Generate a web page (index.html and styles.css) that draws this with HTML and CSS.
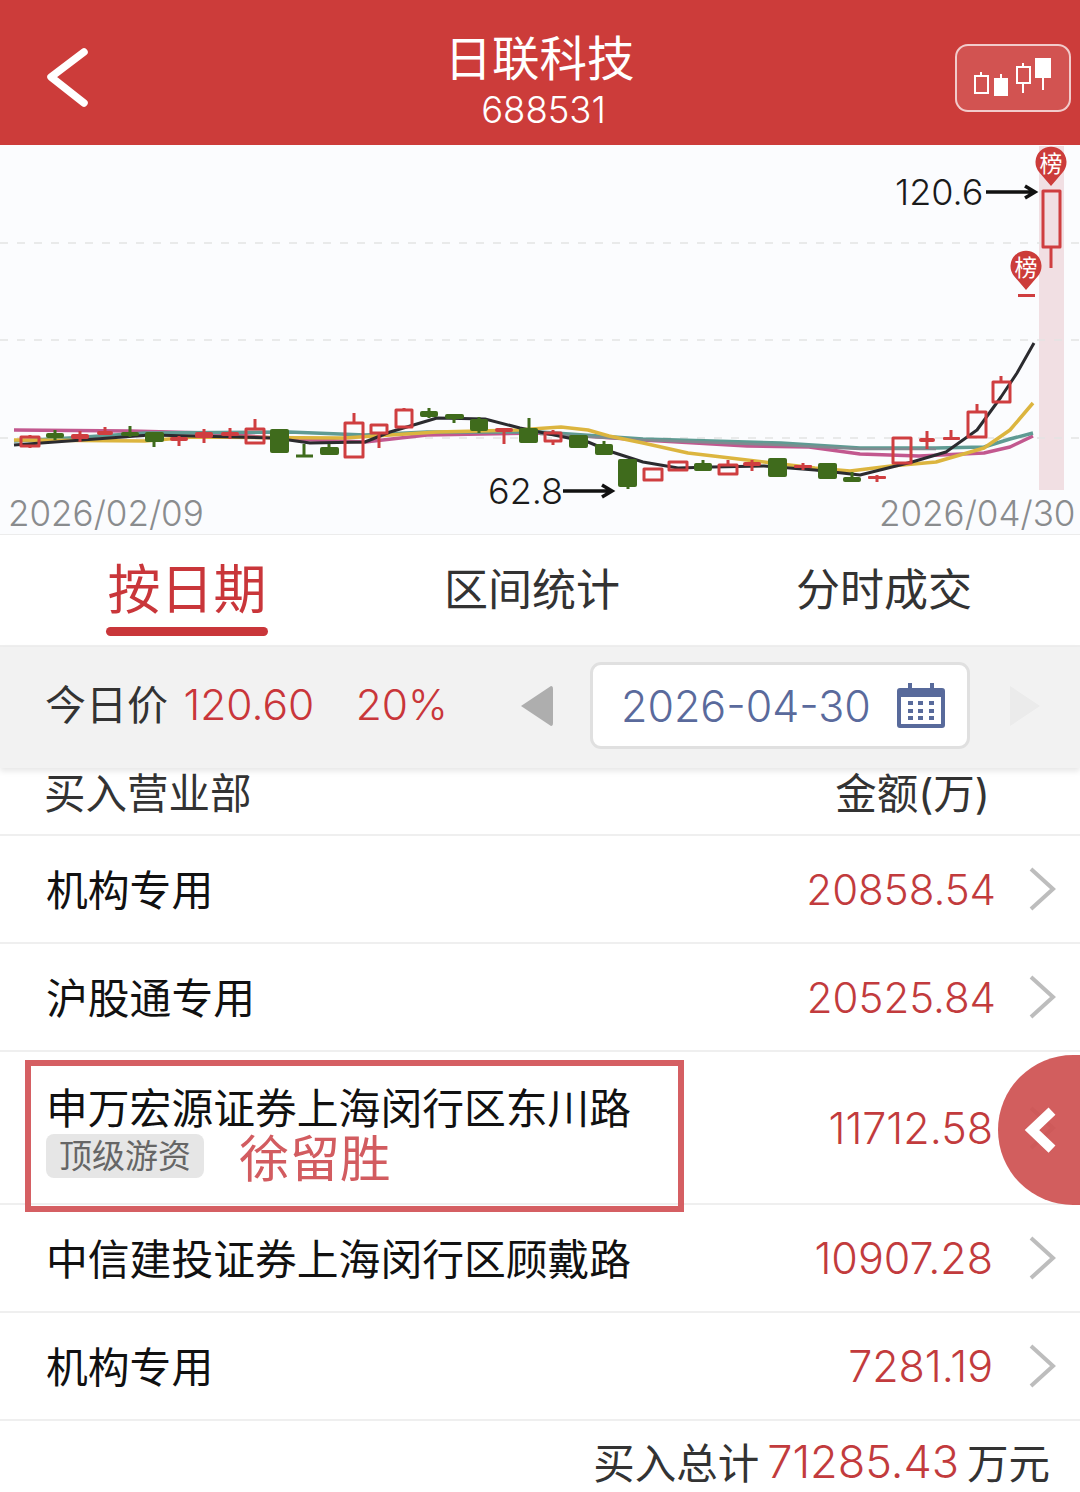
FILE: index.html
```html
<!DOCTYPE html>
<html>
<head>
<meta charset="utf-8">
<title>日联科技</title>
<link rel="stylesheet" href="styles.css">
</head>
<body>
<div class="head">
	<svg class="back" width="50" height="70" viewBox="0 0 50 70"><path d="M38 6 L5 31 L38 57"/></svg>
	<div class="title">
		<div class="name">日联科技</div>
		<div class="code">688531</div>
	</div>
	<div class="kbtn">
		<svg width="114" height="66" viewBox="956 44 114 66">
			<path class="o" d="M982 72V76M976 76H989V93H976Z"/>
			<path class="s" d="M995 78H1009V96H995Z"/>
			<path class="o" d="M1002 74V78"/>
			<path class="o" d="M1024 63V67M1018 67H1031V83H1018ZM1024 83V93"/>
			<path class="s" d="M1036 58H1052V78H1036Z"/>
			<path class="o" d="M1044 78V90"/>
		</svg>
	</div>
</div>

<div class="chart">
	<svg width="1080" height="389" viewBox="0 145 1080 389">
		<rect class="band" x="1039" y="146" width="25" height="344"/>
		<path class="grid" d="M0 243H1080M0 340H1080M0 438H1080"/>

		<polyline class="ma ma-pink" points="14,430 131,431 207,433 289,439 365,442 427,435 540,433 643,440 747,446 809,447 860,454 919,456 984,453 1010,447 1033,436"/>
		<polyline class="ma ma-teal" points="14,441 69,438 145,433 289,432 365,435 427,432 540,432 643,439 781,443 860,448 936,448 984,447 1010,439 1033,433"/>
		<polyline class="ma ma-gray" points="540,434 643,440 781,445 860,449 936,449"/>
		<polyline class="ma ma-yellow" points="14,440 145,441 193,437 344,438 437,432 517,430 561,427 588,430 609,436 643,443 688,453 747,460 815,468 850,471 891,466 936,462 984,448 1010,430 1033,403"/>
		<polyline class="ma ma-black" points="14,445 150,435 275,438 310,443 365,442 390,432 437,418 485,419 520,428 588,442 612,452 643,462 678,468 712,467 764,466 815,470 860,475 884,469 912,462 946,452 977,430 1001,397 1017,373 1034,343"/>

		<!-- 涨 -->
		<g class="up">
			<path d="M30 435V437M30 446V448M21 437H39V446H21Z"/>
			<path d="M255 419V429M246 429H264V443H246Z"/>
			<path d="M354 413V423M345 423H363V457H345Z"/>
			<path d="M379 433V448M371 425H387V433H371Z"/>
			<path d="M404 408V410M396 410H412V427H396Z"/>
			<path d="M553 430V433M553 441V445M545 433H561V441H545Z"/>
			<path d="M644 469H662V480H644Z"/>
			<path d="M669 462H687V470H669Z"/>
			<path d="M728 460V465M719 465H737V474H719Z"/>
			<path d="M893 438H911V463H893Z"/>
			<path d="M977 404V412M968 412H986V437H968Z"/>
			<path d="M1001 376V382M993 382H1010V402H993Z"/>
			<path d="M1051 247V268M1043 191H1060V247H1043Z"/>
		</g>
		<g class="upFill">
			<path class="w" d="M80 431V442M105 427V431M179 436V446M204 429V443M230 428V439M504 428V444M752 460V471M803 463V470M877 475V482M927 431V449M951 430V440"/>
			<rect x="71" y="434" width="18" height="5" rx="2"/>
			<rect x="97" y="431" width="16" height="4" rx="2"/>
			<rect x="170" y="437" width="18" height="4" rx="2"/>
			<rect x="195" y="432" width="18" height="6" rx="2"/>
			<rect x="221" y="432" width="18" height="4" rx="2"/>
			<rect x="495" y="428" width="18" height="4" rx="2"/>
			<rect x="743" y="462" width="18" height="4" rx="2"/>
			<rect x="794" y="465" width="18" height="3" rx="1"/>
			<rect x="868" y="476" width="18" height="3" rx="1"/>
			<rect x="919" y="438" width="16" height="4" rx="2"/>
			<rect x="943" y="437" width="17" height="3" rx="1"/>
			<rect x="1018" y="294" width="17" height="3"/>
		</g>

		<!-- 跌 -->
		<g class="down">
			<path class="w" d="M55 430V440M130 426V437M154 442V447M304 444V457M296 456H313M329 444V447M429 408V418M454 419V423M479 417V433M529 418V428M604 441V444M628 487V489M703 460V463M852 472V477"/>
			<rect x="46" y="433" width="18" height="5" rx="2"/>
			<rect x="121" y="432" width="18" height="4" rx="2"/>
			<rect x="145" y="432" width="19" height="10" rx="2"/>
			<rect x="270" y="429" width="19" height="24" rx="2"/>
			<rect x="320" y="447" width="19" height="8" rx="2"/>
			<rect x="420" y="411" width="18" height="6" rx="2"/>
			<rect x="445" y="414" width="19" height="5" rx="2"/>
			<rect x="470" y="419" width="18" height="12" rx="2"/>
			<rect x="519" y="428" width="19" height="15" rx="2"/>
			<rect x="569" y="435" width="19" height="13" rx="2"/>
			<rect x="595" y="444" width="18" height="11" rx="2"/>
			<rect x="618" y="459" width="19" height="28" rx="2"/>
			<rect x="694" y="463" width="18" height="8" rx="2"/>
			<rect x="768" y="458" width="19" height="19" rx="2"/>
			<rect x="818" y="463" width="19" height="16" rx="2"/>
			<rect x="843" y="477" width="18" height="5" rx="2"/>
		</g>

		<path class="pin" d="M1051 186 L1039 172 A15.500 15.500 0 1 1 1063 172 Z"/>
		<text class="pin-t" x="1051" y="172">榜</text>
		<path class="pin" d="M1026 290 L1014 276 A15.500 15.500 0 1 1 1038 276 Z"/>
		<text class="pin-t" x="1026" y="276">榜</text>

		<text class="price" x="895" y="205">120.6</text>
		<path class="arrow" d="M986 192H1034M1025 186L1035 192L1025 198"/>
		<text class="price" x="488" y="504">62.8</text>
		<path class="arrow" d="M563 491H611M602 485L612 491L602 497"/>

		<text class="date" x="8" y="526">2026/02/09</text>
		<text class="date" x="879" y="526">2026/04/30</text>
	</svg>
</div>

<div class="tabs">
	<a class="tab active">按日期</a>
	<a class="tab">区间统计</a>
	<a class="tab">分时成交</a>
</div>

<div class="dateBar">
	<div class="today">
		<span>今日价</span>
		<em class="price1">120.60</em>
		<em class="pct">20%</em>
	</div>
	<svg class="tri" width="32" height="40" viewBox="0 0 32 40"><path class="tri-on" d="M30 0Q32 0 32 3V37Q32 40 30 40L0 20Z"/></svg>
	<div class="pick">
		<span>2026-04-30</span>
		<svg width="48" height="45" viewBox="0 0 48 45">
			<path class="cal" d="M3 5H11V0H15V5H33V0H37V5H45Q48 5 48 8V42Q48 45 45 45H3Q0 45 0 42V8Q0 5 3 5Z"/>
			<path class="cal-in" d="M4 14H44V41H4Z"/>
			<path class="cal" d="M11 18h5v4h-5zM21 18h5v4h-5zM32 18h5v4h-5zM11 26h5v4h-5zM21 26h5v4h-5zM32 26h5v4h-5zM11 33h5v4h-5zM21 33h5v4h-5zM32 33h5v4h-5z"/>
		</svg>
	</div>
	<svg class="tri" width="30" height="40" viewBox="0 0 30 40"><path class="tri-off" d="M0 0L30 20L0 40Z"/></svg>
</div>

<div class="listHead">
	<span>买入营业部</span>
	<span class="amt">金额(万)</span>
</div>

<div class="row">
	<div class="who">机构专用</div>
	<div class="val first">20858.54</div>
	<svg class="more" width="28" height="46" viewBox="0 0 28 46"><path d="M3 3L25 23L3 43"/></svg>
</div>
<div class="row">
	<div class="who">沪股通专用</div>
	<div class="val first">20525.84</div>
	<svg class="more" width="28" height="46" viewBox="0 0 28 46"><path d="M3 3L25 23L3 43"/></svg>
</div>
<div class="row big">
	<div class="who">
		申万宏源证券上海闵行区东川路
		<div class="tagLine"><span class="tag">顶级游资</span><span class="person">徐留胜</span></div>
	</div>
	<div class="val">11712.58</div>
	<svg class="more" width="28" height="46" viewBox="0 0 28 46"><path d="M3 3L25 23L3 43"/></svg>
	<div class="mark"></div>
	<div class="floatBtn">
		<svg width="34" height="48" viewBox="0 0 34 48"><path d="M28 5L8 24L28 43"/></svg>
	</div>
</div>
<div class="row">
	<div class="who">中信建投证券上海闵行区顾戴路</div>
	<div class="val">10907.28</div>
	<svg class="more" width="28" height="46" viewBox="0 0 28 46"><path d="M3 3L25 23L3 43"/></svg>
</div>
<div class="row">
	<div class="who">机构专用</div>
	<div class="val">7281.19</div>
	<svg class="more" width="28" height="46" viewBox="0 0 28 46"><path d="M3 3L25 23L3 43"/></svg>
</div>

<div class="total">
	<span>买入总计</span><em>71285.43</em><span>万元</span>
</div>
</body>
</html>
```

FILE: styles.css
```css
html,body{
	margin:0;
	padding:0;
	width:1080px;
	height:1492px;
	overflow:hidden;
	background:#fff;
	font-family:Inter,"Noto Sans CJK SC",sans-serif;
	color:#222;
}
em{
	font-style:normal;
}

.head{
	height:145px;
	background:#cc3c3a;
	color:#fff;
	display:flex;
	align-items:center;
	justify-content:center;
	position:relative;
}
.head .back{
	position:absolute;
	left:46px;
	top:46px;
}
.head .back path{
	fill:none;
	stroke:#fff;
	stroke-width:7.500;
	stroke-linecap:round;
	stroke-linejoin:round;
}
.title{
	text-align:center;
	margin-left:7px;
	padding-top:18px;
}
.title .name{
	font-size:47.500px;
	line-height:56px;
	margin:0 0 0 -8px;
}
.title .code{
	font-size:36.500px;
	font-weight:300;
	line-height:46px;
}
.kbtn{
	position:absolute;
	left:955px;
	top:44px;
	width:112px;
	height:64px;
	border:2px solid rgba(255,255,255,.7);
	border-radius:13px;
	background:rgba(255,255,255,.12);
}
.kbtn svg{
	display:block;
	margin:-2px;
}
.kbtn .o{
	fill:none;
	stroke:#fff;
	stroke-width:2;
}
.kbtn .s{
	fill:#fff;
}

.chart{
	height:389px;
	background:#fbfcfe;
	border-bottom:1px solid #ececec;
}
.chart svg{
	display:block;
}
.band{
	fill:#f1dfe3;
}
.grid{
	fill:none;
	stroke:#e4e4e4;
	stroke-width:1.500;
	stroke-dasharray:8 9;
}
.ma{
	fill:none;
	stroke-width:3.500;
	stroke-linejoin:round;
}
.ma-pink{stroke:#c2588f;}
.ma-teal{stroke:#5f9b93;}
.ma-gray{stroke:#7f8b90;stroke-width:2.500;}
.ma-yellow{stroke:#dcb53f;}
.ma-black{stroke:#2b2b2f;stroke-width:3;}
.up path{
	fill:none;
	stroke:#cf3e40;
	stroke-width:3;
	stroke-linejoin:round;
}
.upFill rect{
	fill:#cf3e40;
}
.upFill .w{
	fill:none;
	stroke:#cf3e40;
	stroke-width:3;
}
.down rect{
	fill:#3f6b1c;
}
.down .w{
	fill:none;
	stroke:#3f6b1c;
	stroke-width:3;
}
.pin{
	fill:#cc3c3a;
}
.pin-t{
	fill:#fff;
	font-size:23px;
	text-anchor:middle;
}
.price{
	fill:#1a1a1a;
	font-size:36px;
	font-weight:300;
}
.arrow{
	fill:none;
	stroke:#111;
	stroke-width:3.500;
}
.date{
	fill:#8a8c8e;
	font-size:35px;
	font-weight:300;
}

.tabs{
	height:112px;
	display:flex;
	box-sizing:border-box;
	border-bottom:2px solid #efefef;
	padding-left:12px;
}
.tab{
	width:340px;
	text-align:center;
	font-size:44px;
	line-height:110px;
	color:#333;
}
.tab:nth-child(1){
	width:350px;
}
.tab:nth-child(3){
	width:364px;
}
.tab.active{
	color:#c9363a;
	font-size:53px;
	position:relative;
}
.tab.active:after{
	content:"";
	position:absolute;
	left:94px;
	top:92px;
	width:162px;
	height:9px;
	border-radius:5px;
	background:#c9363a;
}

.dateBar{
	height:121px;
	background:#f2f2f2;
	box-shadow:0 3px 6px rgba(0,0,0,.1);
	display:flex;
	align-items:center;
	position:relative;
	padding:0 0 4px 45px;
	box-sizing:border-box;
}
.today{
	width:476px;
	font-size:41px;
	white-space:nowrap;
	color:#333;
	margin-top:-8px;
}
.today em{
	color:#c9363a;
	font-size:42.500px;
	font-weight:300;
}
.today .price1{
	margin-left:4px;
}
.today .pct{
	margin-left:30px;
}
.tri-on{fill:#aeaeae;}
.tri-off{fill:#ebebeb;}
.pick{
	width:380px;
	height:87px;
	box-sizing:border-box;
	margin:0 40px 0 37px;
	border:3px solid #e0e0e0;
	border-radius:11px;
	background:#fff;
	display:flex;
	align-items:center;
	padding-left:28px;
	color:#5a6a9c;
	font-size:43px;
	font-weight:300;
}
.pick span{
	width:249px;
	white-space:nowrap;
}
.pick svg{
	margin-left:27px;
}
.cal{fill:#586a9b;}
.cal-in{fill:#fff;}

.listHead{
	height:68px;
	box-sizing:border-box;
	border-bottom:2px solid #efefef;
	padding:0 90px 20px 44px;
	display:flex;
	justify-content:space-between;
	align-items:center;
	font-size:41.500px;
	color:#333;
}
.row{
	height:108px;
	box-sizing:border-box;
	border-bottom:2px solid #efefef;
	padding:0 24px 0 46px;
	display:flex;
	align-items:center;
	position:relative;
}
.row .who{
	flex:1;
	font-size:41.800px;
	line-height:54px;
	color:#111;
	padding-top:3px;
}
.row .val{
	font-size:43px;
	font-weight:300;
	color:#c23b3d;
	margin-right:35px;
}
.row .val.first{
	font-size:42px;
	margin-right:32px;
}
.more path{
	fill:none;
	stroke:#bdbdbd;
	stroke-width:4;
}
.row.big{
	height:153px;
}
.row.big .who{
	padding-top:5px;
}
.tagLine{
	display:flex;
	align-items:center;
	height:46px;
	margin-top:-3px;
}
.tag{
	font-size:33px;
	line-height:44px;
	padding:0 13px;
	background:#e6e6e6;
	color:#666;
	border-radius:8px;
}
.person{
	margin-left:35px;
	font-size:50.500px;
	color:#d25c60;
	position:relative;
	top:3px;
}
.mark{
	position:absolute;
	left:25px;
	top:8px;
	width:659px;
	height:152px;
	box-sizing:border-box;
	border:6px solid #d55f63;
}
.floatBtn{
	position:absolute;
	left:998px;
	top:3px;
	width:82px;
	height:150px;
	border-radius:75px 0 0 75px;
	background:rgba(207,82,82,.93);
}
.floatBtn svg{
	position:absolute;
	left:26px;
	top:51px;
}
.floatBtn path{
	fill:none;
	stroke:#fff;
	stroke-width:10;
}

.total{
	height:72px;
	box-sizing:border-box;
	padding:8px 30px 0 0;
	display:flex;
	justify-content:flex-end;
	align-items:center;
	font-size:41.500px;
	color:#333;
}
.total em{
	font-size:45px;
	font-weight:300;
	color:#c23b3d;
	margin:0 8px;
}
```
